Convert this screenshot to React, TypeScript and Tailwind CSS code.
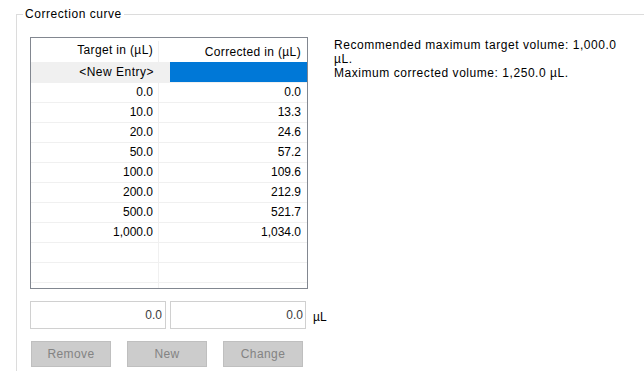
import React from 'react';

const rows: [string, string][] = [
  ['0.0', '0.0'],
  ['10.0', '13.3'],
  ['20.0', '24.6'],
  ['50.0', '57.2'],
  ['100.0', '109.6'],
  ['200.0', '212.9'],
  ['500.0', '521.7'],
  ['1,000.0', '1,034.0'],
  ['', ''],
  ['', ''],
  ['', ''],
];

export default function App() {
  return (
    <div
      className="w-[644px] h-[371px] bg-white overflow-hidden text-[12px] text-black"
      style={{ fontFamily: '"Liberation Sans", Arial, sans-serif' }}
    >
      <fieldset className="ml-[16px] mt-[6px] h-[365px] border-l border-t border-[#dcdcdc]">
        <legend className="ml-[6px] px-[2px] leading-[16px] tracking-[0.55px]">Correction curve</legend>

        <div className="flex mt-[15px] ml-[13px]">
          {/* table + inputs + buttons */}
          <div className="w-[278px] flex flex-col">
            <div className="h-[252px] border border-[#828790] overflow-hidden">
              <div className="flex h-[24px] items-center pt-[3px]">
                <div className="w-[128px] h-full border-r border-[#f0f0f0] text-right pr-[5px] leading-[18px] tracking-[0.35px]">
                  Target in (µL)
                </div>
                <div className="flex-1 text-right pr-[6px] leading-[18px] tracking-[0.35px]">Corrected in (µL)</div>
              </div>
              <div className="flex h-[20px] bg-[#f0f0f0]">
                <div className="w-[139px] text-right pr-[16px] leading-[20px] tracking-[0.5px]">&lt;New Entry&gt;</div>
                <div className="flex-1 bg-[#0078d7]" />
              </div>
              {rows.map((r, i) => (
                <div key={i} className="flex h-[20px] border-t border-[#f0f0f0]">
                  <div className="w-[128px] border-r border-[#f0f0f0] text-right pr-[5px] leading-[19px]">{r[0]}</div>
                  <div className="flex-1 text-right pr-[6px] leading-[19px]">{r[1]}</div>
                </div>
              ))}
            </div>

            <div className="flex items-center mt-[12px]">
              <input
                readOnly
                value="0.0"
                className="w-[136px] h-[28px] border border-[#d0d0d0] text-right pr-[3px] text-[#3c3c3c] outline-none"
              />
              <input
                readOnly
                value="0.0"
                className="w-[136px] h-[28px] ml-[4px] border border-[#d0d0d0] text-right pr-[2px] text-[#3c3c3c] outline-none"
              />
              <span className="ml-[7px] pt-[4px]">µL</span>
            </div>

            <div className="flex gap-[16px] mt-[12px] ml-px">
              {['Remove', 'New', 'Change'].map((b) => (
                <button
                  key={b}
                  disabled
                  className="w-[80px] h-[26px] bg-[#cccccc] border border-[#bfbfbf] text-[#838383] tracking-[0.4px]"
                >
                  {b}
                </button>
              ))}
            </div>
          </div>

          <div className="ml-[26px] mt-px leading-[14px] tracking-[0.55px]">
            Recommended maximum target volume: 1,000.0
            <br />
            µL.
            <br />
            Maximum corrected volume: 1,250.0 µL.
          </div>
        </div>
      </fieldset>
    </div>
  );
}
